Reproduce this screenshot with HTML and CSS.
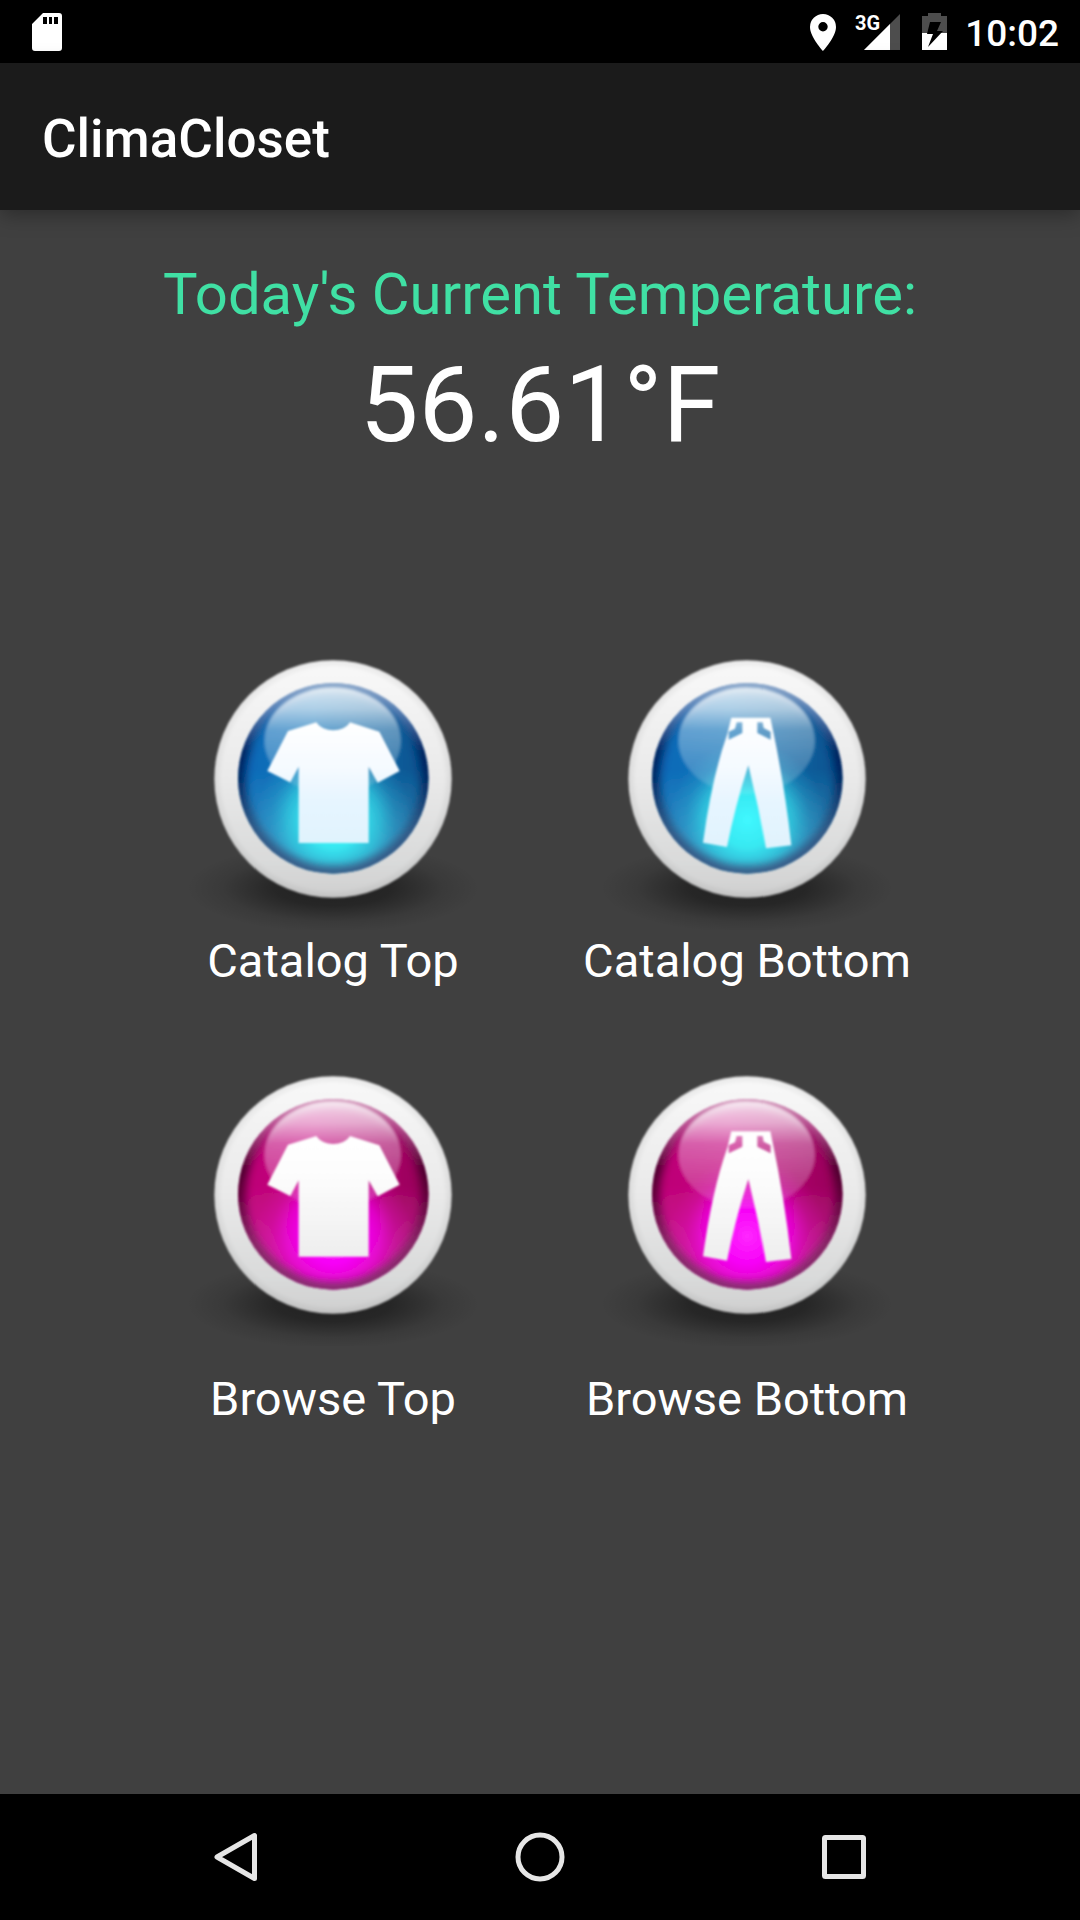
FILE: index.html
```html
<!DOCTYPE html>
<html lang="en">
<head>
<meta charset="utf-8">
<meta name="viewport" content="width=device-width, initial-scale=1">
<title>ClimaCloset</title>
<link rel="stylesheet" href="styles.css">
</head>
<body>
<svg class="defs" width="0" height="0" aria-hidden="true">
  <defs>
    <linearGradient id="ring" x1="0" y1="0" x2="0" y2="1">
      <stop offset="0" stop-color="#f9f9f9"/><stop offset=".5" stop-color="#e9e9e9"/><stop offset=".85" stop-color="#d9dada"/><stop offset="1" stop-color="#cfcfcf"/>
    </linearGradient>
    <radialGradient id="ringEdge">
      <stop offset=".93" stop-color="#000" stop-opacity="0"/><stop offset="1" stop-color="#000" stop-opacity=".07"/>
    </radialGradient>
    <radialGradient id="shadow">
      <stop offset="0" stop-color="#000" stop-opacity=".5"/><stop offset=".4" stop-color="#000" stop-opacity=".4"/><stop offset=".75" stop-color="#000" stop-opacity=".1"/><stop offset="1" stop-color="#000" stop-opacity="0"/>
    </radialGradient>
    <linearGradient id="gloss" x1="0" y1="0" x2="0" y2="1">
      <stop offset="0" stop-color="#fff" stop-opacity=".82"/><stop offset=".2" stop-color="#fff" stop-opacity=".66"/><stop offset=".4" stop-color="#fff" stop-opacity=".36"/><stop offset="1" stop-color="#fff" stop-opacity=".12"/>
    </linearGradient>
    <linearGradient id="blueBase" x1="0" y1="0" x2="1" y2="0">
      <stop offset="0" stop-color="#0a69b8"/><stop offset=".4" stop-color="#1173b8"/><stop offset="1" stop-color="#07528d"/>
    </linearGradient>
    <linearGradient id="blueLow" x1="0" y1="0" x2="0" y2="1">
      <stop offset=".45" stop-color="#4fa3c8" stop-opacity="0"/><stop offset="1" stop-color="#4fa3c8" stop-opacity=".9"/>
    </linearGradient>
    <radialGradient id="blueGlow">
      <stop offset="0" stop-color="#40f8ff"/><stop offset=".35" stop-color="#38ebf3" stop-opacity=".97"/><stop offset=".6" stop-color="#30cee2" stop-opacity=".7"/><stop offset=".8" stop-color="#2cb8d8" stop-opacity=".25"/><stop offset="1" stop-color="#2cb0d8" stop-opacity="0"/>
    </radialGradient>
    <linearGradient id="blueEdge" x1="0" y1="0" x2="0" y2="1">
      <stop offset="0" stop-color="#9fb2d0"/><stop offset=".15" stop-color="#5c80b5"/><stop offset=".36" stop-color="#00205c"/><stop offset=".5" stop-color="#02265f"/><stop offset=".75" stop-color="#2e5582"/><stop offset="1" stop-color="#3a5b86"/>
    </linearGradient>
    <linearGradient id="blueCloth" x1="0" y1="0" x2="0" y2="1">
      <stop offset="0" stop-color="#fff"/><stop offset=".4" stop-color="#f4faff"/><stop offset=".65" stop-color="#e6f5ff"/><stop offset="1" stop-color="#e0f3fd"/>
    </linearGradient>
    <linearGradient id="pinkBase" x1="0" y1="0" x2="1" y2="0">
      <stop offset="0" stop-color="#bd0076"/><stop offset=".4" stop-color="#c4087f"/><stop offset="1" stop-color="#960058"/>
    </linearGradient>
    <linearGradient id="pinkLow" x1="0" y1="0" x2="0" y2="1">
      <stop offset=".45" stop-color="#d839ae" stop-opacity="0"/><stop offset="1" stop-color="#d839b4" stop-opacity=".9"/>
    </linearGradient>
    <radialGradient id="pinkGlow">
      <stop offset="0" stop-color="#ff28ff"/><stop offset=".35" stop-color="#f800fa" stop-opacity=".97"/><stop offset=".6" stop-color="#ec00dc" stop-opacity=".75"/><stop offset=".8" stop-color="#e000c0" stop-opacity=".28"/><stop offset="1" stop-color="#d800b0" stop-opacity="0"/>
    </radialGradient>
    <linearGradient id="pinkEdge" x1="0" y1="0" x2="0" y2="1">
      <stop offset="0" stop-color="#d8acc6"/><stop offset=".15" stop-color="#b5508f"/><stop offset=".36" stop-color="#48002b"/><stop offset=".5" stop-color="#5a0036"/><stop offset=".75" stop-color="#812862"/><stop offset="1" stop-color="#82306c"/>
    </linearGradient>
    <linearGradient id="pinkCloth" x1="0" y1="0" x2="0" y2="1">
      <stop offset="0" stop-color="#fff"/><stop offset=".3" stop-color="#fdfdfd"/><stop offset="1" stop-color="#eee"/>
    </linearGradient>
    <filter id="soft" x="-20%" y="-20%" width="140%" height="140%"><feGaussianBlur stdDeviation="12"/></filter>
    <filter id="smooth"><feGaussianBlur stdDeviation="3"/></filter>
    <clipPath id="lens"><circle cx="461" cy="415" r="286"/></clipPath>
    <g id="frame">
      <ellipse cx="460" cy="744" rx="440" ry="134" fill="url(#shadow)"/>
      <g filter="url(#smooth)">
        <circle cx="460" cy="417" r="356" fill="url(#ring)"/>
        <circle cx="460" cy="417" r="356" fill="url(#ringEdge)"/>
      </g>
    </g>
    <g id="blueBall" filter="url(#smooth)">
      <g clip-path="url(#lens)">
        <circle cx="461" cy="415" r="286" fill="url(#blueBase)"/>
        <circle cx="461" cy="415" r="286" fill="url(#blueLow)"/>
        <circle cx="461" cy="540" r="235" fill="url(#blueGlow)"/>
        <circle cx="461" cy="415" r="287" fill="none" stroke="url(#blueEdge)" stroke-width="46" filter="url(#soft)"/>
        <ellipse cx="459" cy="302" rx="205" ry="160" fill="url(#gloss)" filter="url(#smooth)"/>
      </g>
    </g>
    <g id="pinkBall" filter="url(#smooth)">
      <g clip-path="url(#lens)">
        <circle cx="461" cy="415" r="286" fill="url(#pinkBase)"/>
        <circle cx="461" cy="415" r="286" fill="url(#pinkLow)"/>
        <circle cx="461" cy="540" r="235" fill="url(#pinkGlow)"/>
        <circle cx="461" cy="415" r="287" fill="none" stroke="url(#pinkEdge)" stroke-width="46" filter="url(#soft)"/>
        <ellipse cx="459" cy="296" rx="205" ry="160" fill="url(#gloss)" filter="url(#smooth)"/>
      </g>
    </g>
    <path id="shirt" filter="url(#smooth)" d="M410 247C430 279 492 279 511 247L599 275L660 393L594 428L567 380V609H357V380L332 427L263 393L325 273Z"/>
    <path id="pants" filter="url(#smooth)" fill-rule="evenodd" d="M413 233H530L536 262Q572 430 593 616L517 625Q495 500 464 376Q424 500 400 621L328 608Q355 410 401 282ZM429 247H446V279L405 299V275L424 266ZM491 247H507L510 264L531 275V299L491 279Z"/>
  </defs>
</svg>

<header class="status-bar">
  <svg class="status-icon" width="32" height="40" viewBox="0 0 32 40" role="img" aria-label="SD card">
    <path fill="#fff" fill-rule="evenodd" d="M11 1H27Q30 1 30 4V36Q30 39 27 39H3Q0 39 0 36V12ZM11 5V12H15V5ZM17 5V12H20V5ZM22 5V12H26V5Z"/>
  </svg>
  <div class="status-group">
    <svg class="status-icon" width="26" height="40" viewBox="0 0 26 40" role="img" aria-label="Location">
      <path fill="#fff" fill-rule="evenodd" d="M13 2A13 13 0 0 0 0 15C0 25 13 39 13 39S26 25 26 15A13 13 0 0 0 13 2ZM13 10A4.700 4.700 0 1 1 13 19.400A4.700 4.700 0 1 1 13 10Z"/>
    </svg>
    <svg class="status-icon signal" width="46" height="40" viewBox="0 0 46 40" role="img" aria-label="3G signal">
      <path fill="#4d4d4d" d="M45 2V38H9Z"/>
      <path fill="#fff" d="M35 12V38H9Z"/>
      <text class="network" x="0" y="18">3G</text>
    </svg>
    <svg class="status-icon battery" width="26" height="40" viewBox="0 0 26 40" role="img" aria-label="Battery charging">
      <path fill="#4d4d4d" d="M6 1H19V4H25V38H0V4H6Z"/>
      <path fill="#fff" d="M0 21H25V38H0Z"/>
      <path fill="#000" d="M8 10H19L15 19H21L6 35L11 22H5Z"/>
    </svg>
    <time class="clock" datetime="10:02">10:02</time>
  </div>
</header>

<div class="app-bar"><h1 class="app-title">ClimaCloset</h1></div>

<main class="content">
  <h2 class="heading">Today's Current Temperature:</h2>
  <p class="temperature">56.61°F</p>
  <div class="tiles">
    <button class="tile" type="button">
      <svg class="tile-icon" viewBox="10 0 900 870" aria-hidden="true"><use href="#frame"/><use href="#blueBall"/><use href="#shirt" fill="url(#blueCloth)"/></svg>
      <span class="tile-label">Catalog Top</span>
    </button>
    <button class="tile" type="button">
      <svg class="tile-icon" viewBox="10 0 900 870" aria-hidden="true"><use href="#frame"/><use href="#blueBall"/><use href="#pants" fill="url(#blueCloth)"/></svg>
      <span class="tile-label">Catalog Bottom</span>
    </button>
    <button class="tile tile-browse" type="button">
      <svg class="tile-icon" viewBox="10 0 900 870" aria-hidden="true"><use href="#frame"/><use href="#pinkBall"/><use href="#shirt" y="-7" fill="url(#pinkCloth)"/></svg>
      <span class="tile-label">Browse Top</span>
    </button>
    <button class="tile tile-browse" type="button">
      <svg class="tile-icon" viewBox="10 0 900 870" aria-hidden="true"><use href="#frame"/><use href="#pinkBall"/><use href="#pants" y="-7" fill="url(#pinkCloth)"/></svg>
      <span class="tile-label">Browse Bottom</span>
    </button>
  </div>
</main>

<nav class="nav-bar" aria-label="System">
  <button class="nav-button" type="button" aria-label="Back">
    <svg width="52" height="52" viewBox="0 0 52 52"><path d="M44.500 4.500V47.500L7 26Z"/></svg>
  </button>
  <button class="nav-button" type="button" aria-label="Home">
    <svg width="52" height="52" viewBox="0 0 52 52"><circle cx="26" cy="26" r="22"/></svg>
  </button>
  <button class="nav-button" type="button" aria-label="Recent apps">
    <svg width="52" height="52" viewBox="0 0 52 52"><rect x="6.500" y="6.500" width="39" height="39" rx="1"/></svg>
  </button>
</nav>
</body>
</html>
```
FILE: styles.css
```css
* {
  box-sizing: border-box;
}

body {
  margin: 0;
  min-height: 100vh;
  display: flex;
  flex-direction: column;
  background: #404040;
  color: #fff;
  font-family: Roboto, "Noto Sans", sans-serif;
}

h1, h2, p {
  margin: 0;
  font-weight: 400;
}

button {
  padding: 0;
  border: 0;
  background: none;
  color: inherit;
  font: inherit;
  cursor: pointer;
}

.defs {
  position: absolute;
}

.status-bar {
  display: flex;
  justify-content: space-between;
  align-items: center;
  height: 63px;
  padding: 0 21px 0 32px;
  background: #000;
}

.status-group {
  display: flex;
  align-items: center;
}

.status-icon {
  display: block;
  overflow: visible;
}

.signal {
  margin-left: 19px;
}

.battery {
  margin: 0 17px 0 21px;
}

.network {
  fill: #fff;
  font-size: 20px;
  font-weight: 700;
}

.clock {
  padding-top: 4px;
  font-size: 37px;
  font-weight: 500;
  line-height: 44px;
}

.app-bar {
  display: flex;
  align-items: center;
  height: 147px;
  padding: 4px 42px 0;
  background: #1b1b1b;
  box-shadow: 0 4px 20px rgba(0, 0, 0, 0.35);
}

.app-title {
  font-size: 53px;
  font-weight: 500;
  line-height: 62px;
}

.content {
  flex: 1;
  padding-top: 50px;
  text-align: center;
}

.heading {
  color: #40e0a4;
  font-size: 58px;
  line-height: 68px;
}

.temperature {
  margin-top: 16px;
  font-size: 105px;
  line-height: 124px;
}

.tiles {
  display: grid;
  grid-template-columns: 1fr 1fr;
  row-gap: 64px;
  max-width: 828px;
  margin: 172px auto 0;
}

.tile {
  display: flex;
  flex-direction: column;
  align-items: center;
}

.tile-icon {
  width: 300px;
  height: 290px;
}

.tile-label {
  font-size: 47px;
  line-height: 62px;
}

.tile-browse {
  gap: 22px;
}

.nav-bar {
  display: flex;
  justify-content: center;
  height: 126px;
  background: #000;
}

.nav-button {
  flex: 0 1 304px;
  display: flex;
  align-items: center;
  justify-content: center;
}

.nav-button svg {
  fill: none;
  stroke: #e6e6e6;
  stroke-width: 5px;
  stroke-linejoin: round;
}
```
